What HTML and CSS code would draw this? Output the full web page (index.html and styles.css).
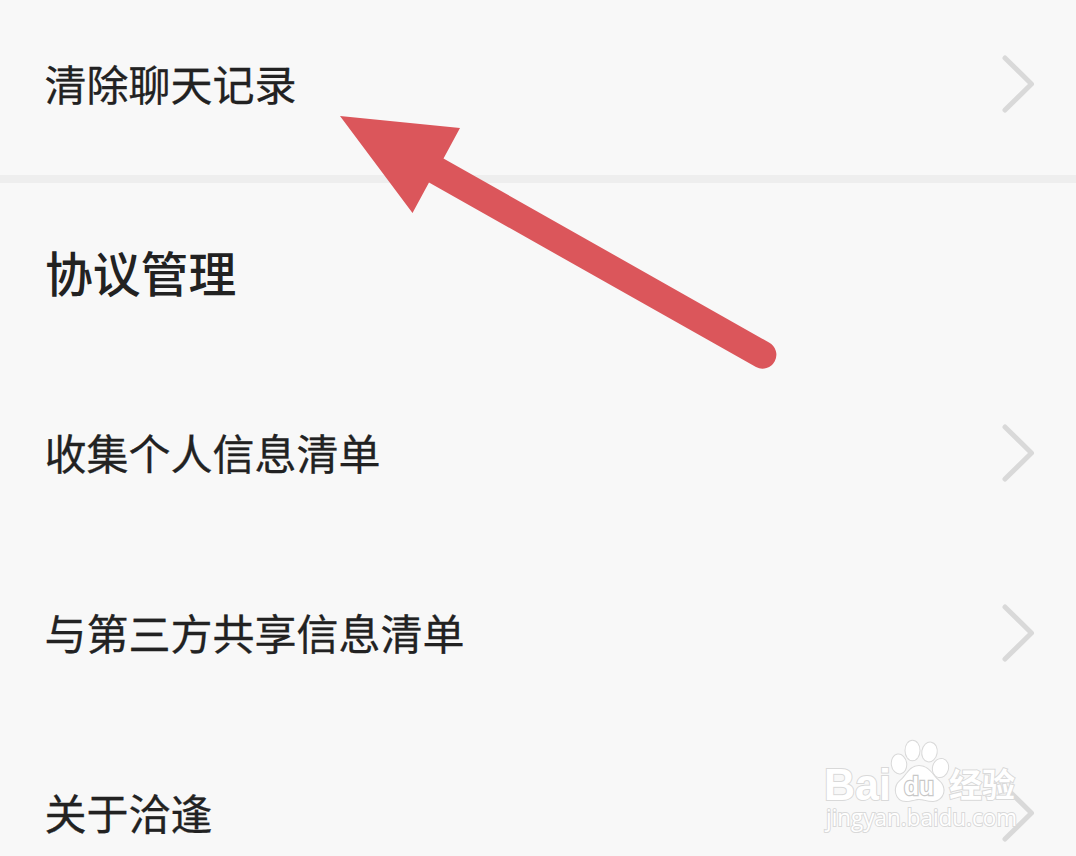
FILE: index.html
```html
<!DOCTYPE html>
<html lang="zh-CN">
<head>
<meta charset="utf-8">
<title>协议管理</title>
<link rel="stylesheet" href="styles.css">
</head>
<body>
<main class="settings">
  <div class="row row-first"><span class="label">清除聊天记录</span><svg class="chevron" viewBox="0 0 34 60"><path d="M4 4 30.500 30 4 56"/></svg></div>
  <div class="divider"></div>
  <h2 class="heading">协议管理</h2>
  <div class="row"><span class="label">收集个人信息清单</span><svg class="chevron" viewBox="0 0 34 60"><path d="M4 4 30.500 30 4 56"/></svg></div>
  <div class="row"><span class="label">与第三方共享信息清单</span><svg class="chevron" viewBox="0 0 34 60"><path d="M4 4 30.500 30 4 56"/></svg></div>
  <div class="row"><span class="label">关于洽逢</span><svg class="chevron" viewBox="0 0 34 60"><path d="M4 4 30.500 30 4 56"/></svg></div>
  <svg class="arrow" viewBox="0 0 440 256">
    <path d="M0 0 120 12 103.500 42.500 429 226.500A13.500 13.500 0 0 1 416 251L89 66.500 72.500 97Z"/>
  </svg>
  <svg class="watermark" viewBox="0 0 230 126">
    <g class="mark">
      <text class="brand" x="14" y="70" textLength="67" lengthAdjust="spacingAndGlyphs">Bai</text>
      <ellipse cx="89" cy="34" rx="7.200" ry="9.500" transform="rotate(-8 89 34)"/>
      <ellipse cx="102.500" cy="20.500" rx="7" ry="9.800"/>
      <ellipse cx="119.500" cy="22" rx="7.200" ry="9.500" transform="rotate(10 119.500 22)"/>
      <ellipse cx="130.500" cy="38" rx="7.500" ry="9.200" transform="rotate(15 130.500 38)"/>
      <path d="M109 36C99 36 97 46 90 51C83 57 85 71 96 71C102 71 105 69 109 69C113 69 117 71 123 71C134 70 137 58 129 51C122 45 119 36 109 36Z"/>
      <text class="du" x="94" y="65" textLength="30" lengthAdjust="spacingAndGlyphs">du</text>
      <text class="cjk" x="139" y="67" textLength="66" lengthAdjust="spacingAndGlyphs">经验</text>
      <text class="site" x="16" y="96" textLength="191" lengthAdjust="spacingAndGlyphs">jingyan.baidu.com</text>
    </g>
  </svg>
</main>
</body>
</html>
```
FILE: styles.css
```css
body {
  margin: 0;
  background: #f8f8f8;
  color: #222;
  font-family: "Noto Sans CJK SC", sans-serif;
}
.settings {
  position: relative;
  height: 856px;
  overflow: hidden;
}
.row {
  box-sizing: border-box;
  height: 180px;
  padding: 0 41px 0 44.500px;
  display: flex;
  align-items: center;
  justify-content: space-between;
}
.row-first {
  height: 175px;
  padding-bottom: 7px;
}
.label {
  font-size: 42px;
  line-height: 60px;
  padding-bottom: 2px;
  white-space: nowrap;
  -webkit-text-stroke: 0.300px #222;
}
.chevron {
  width: 34px;
  height: 60px;
  fill: none;
  stroke: #d9d9d9;
  stroke-width: 5;
  stroke-linecap: round;
  stroke-linejoin: round;
}
.divider {
  height: 8px;
  background: #eee;
}
.heading {
  box-sizing: border-box;
  height: 180px;
  margin: 0;
  padding: 0 0 0 45px;
  font-size: 47.800px;
  font-weight: 500;
  line-height: 178px;
}
.arrow {
  position: absolute;
  left: 340px;
  top: 116px;
  width: 440px;
  height: 256px;
  fill: #db565b;
}
.watermark {
  position: absolute;
  left: 810px;
  top: 730px;
  width: 230px;
  height: 126px;
}
.mark {
  fill: #fff;
  stroke: #d9d9d9;
  stroke-width: 2;
  paint-order: stroke;
}
.brand {
  font: bold 44px "Liberation Sans", sans-serif;
}
.du {
  font: bold 26px "Liberation Sans", sans-serif;
  stroke: #c8c8c8;
  stroke-width: 2.5;
}
.cjk {
  font: 700 33px "Noto Sans CJK SC", sans-serif;
}
.site {
  font: 24px "Open Sans", sans-serif;
}
```
